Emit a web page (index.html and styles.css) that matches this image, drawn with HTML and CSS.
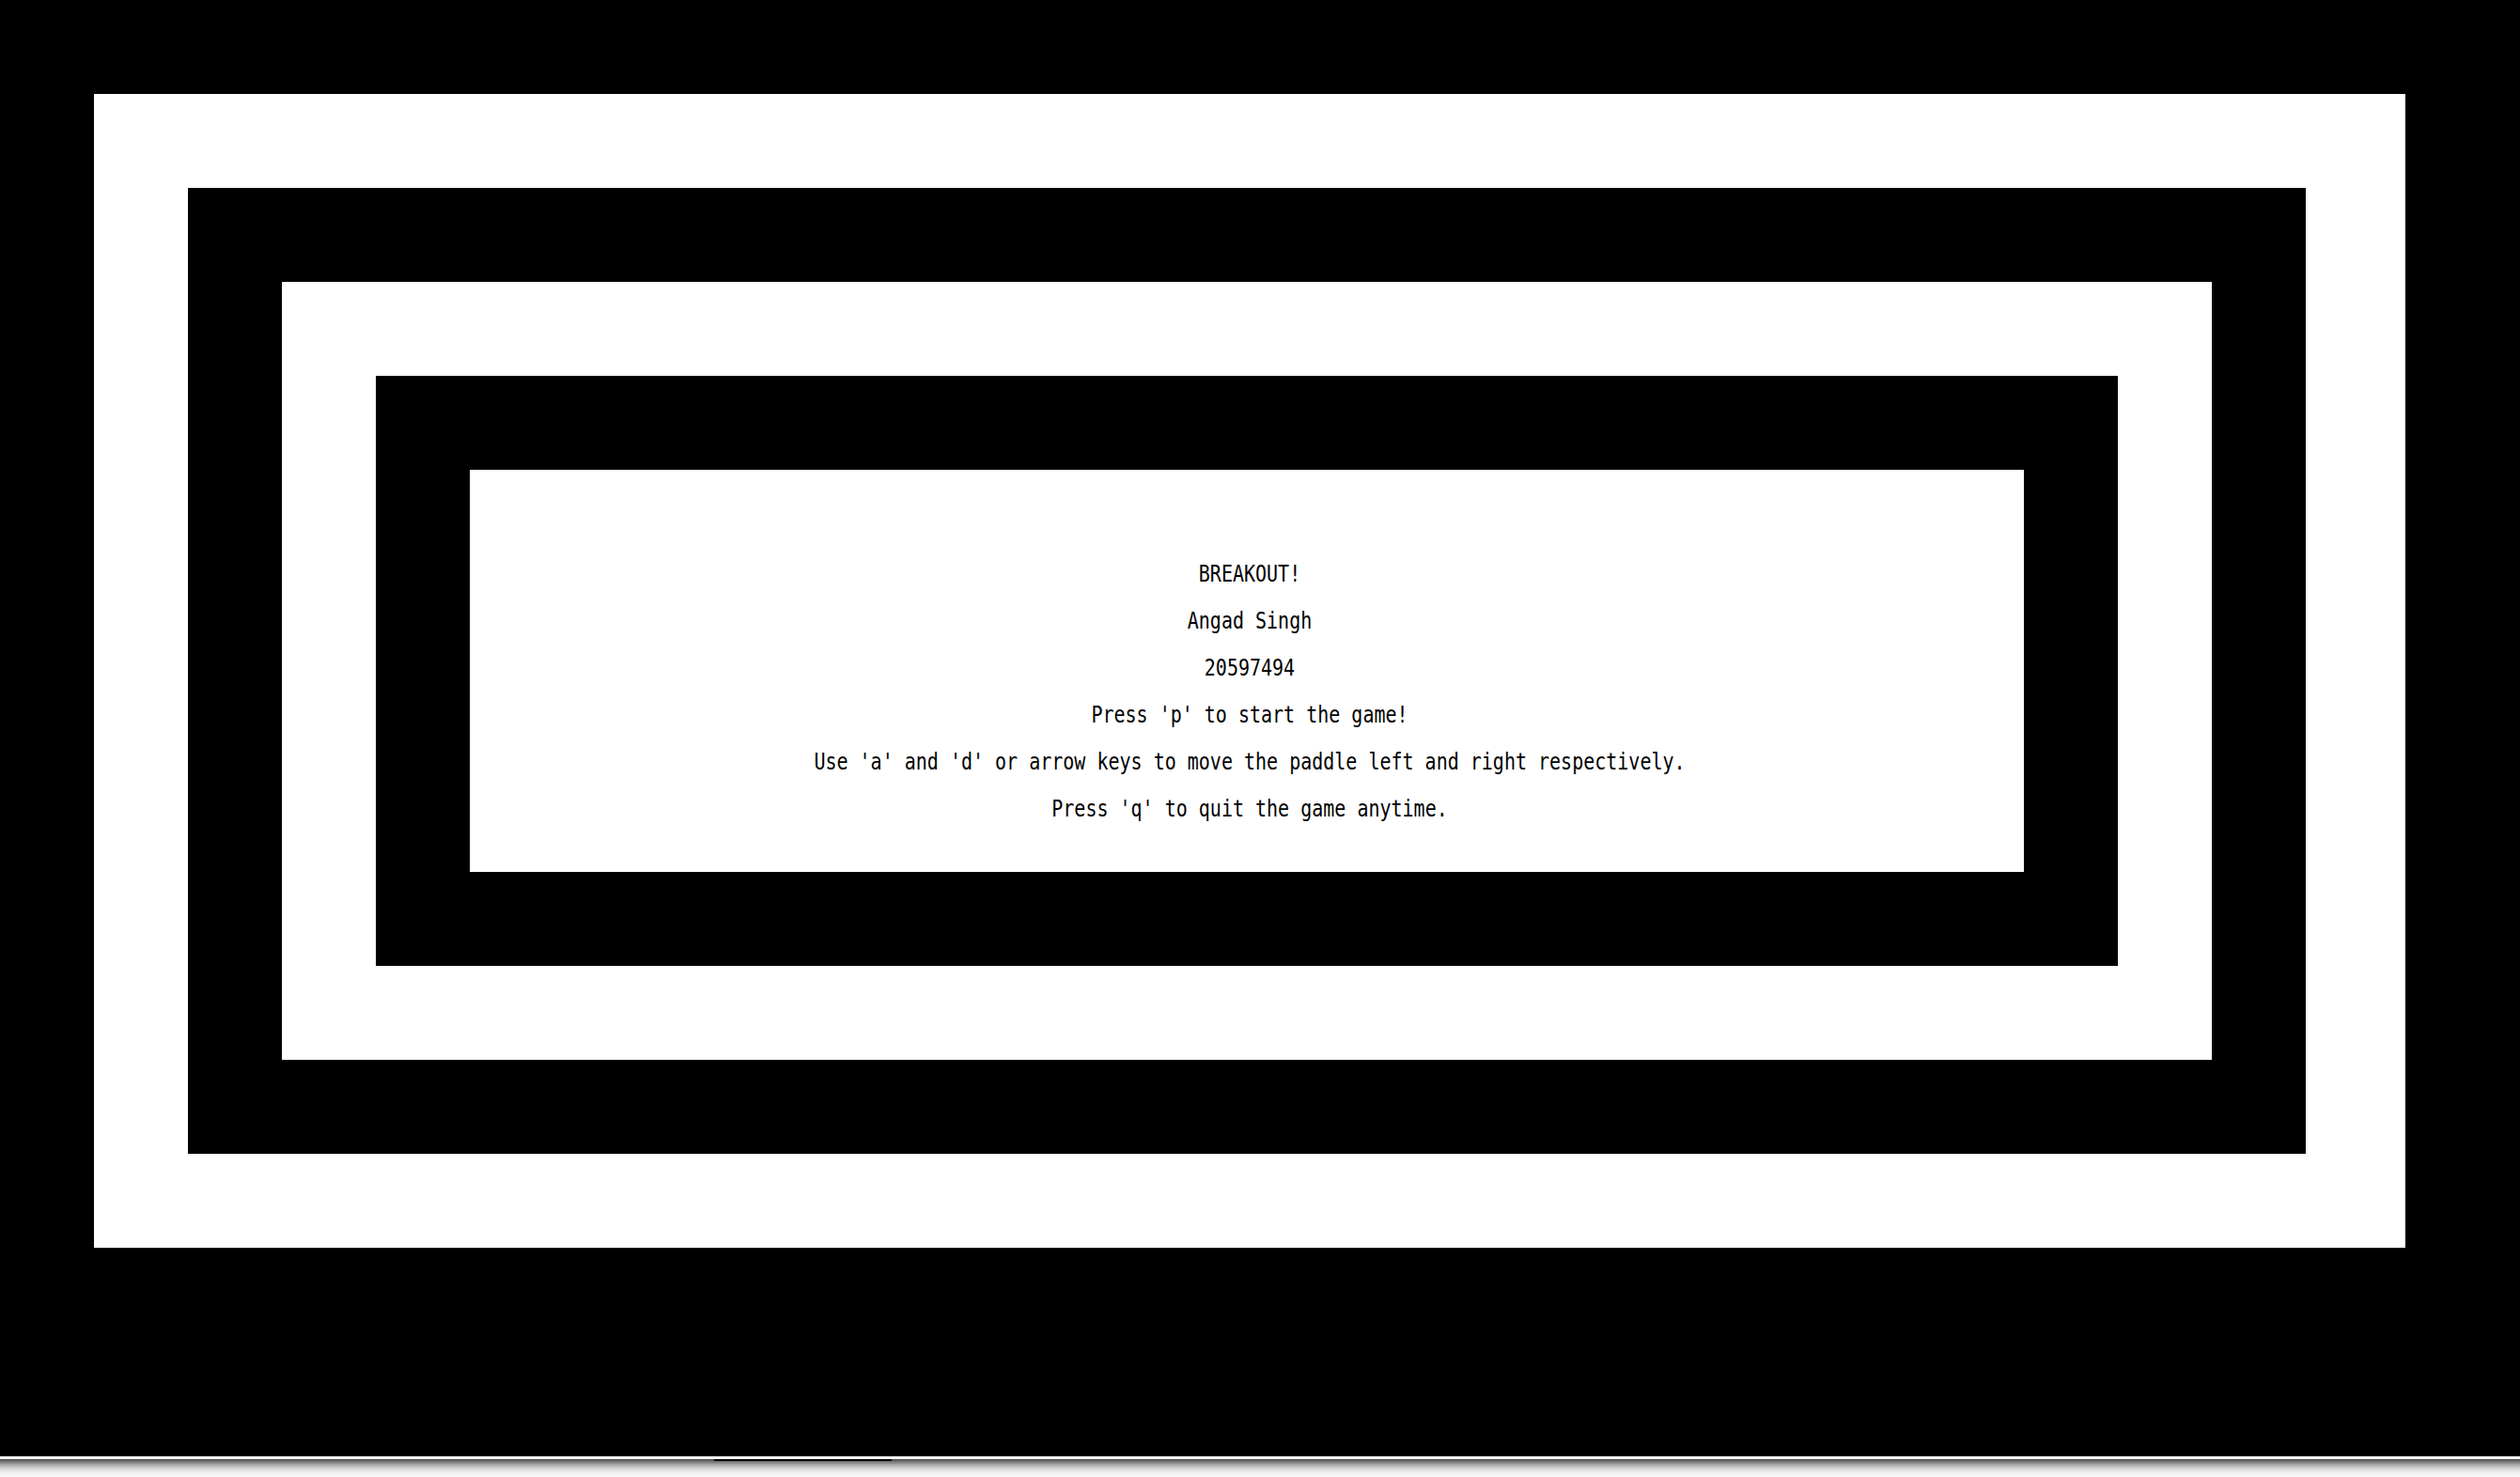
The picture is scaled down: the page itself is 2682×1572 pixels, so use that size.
FILE: index.html
```html
<!DOCTYPE html>
<html lang="en">
<head>
<meta charset="utf-8">
<title>Breakout</title>
<link rel="stylesheet" href="styles.css">
</head>
<body>
<main class="game">
  <div class="ring ring-outer">
    <div class="ring ring-dark">
      <div class="ring ring-light">
        <div class="ring ring-dark">
          <div class="screen">
            <p class="line">BREAKOUT!</p>
            <p class="line">Angad Singh</p>
            <p class="line">20597494</p>
            <p class="line">Press 'p' to start the game!</p>
            <p class="line">Use 'a' and 'd' or arrow keys to move the paddle left and right respectively.</p>
            <p class="line">Press 'q' to quit the game anytime.</p>
          </div>
        </div>
      </div>
    </div>
  </div>
</main>
<footer class="below">
  <span class="link-line"></span>
</footer>
</body>
</html>
```
FILE: styles.css
```css
html, body {
  margin: 0;
  padding: 0;
  background: #fff;
}

.game {
  background: #000;
  height: 1550px;
  box-sizing: border-box;
  padding: 100px 0 0 100px;
}

.ring {
  box-sizing: border-box;
  padding: 100px;
  height: 100%;
}

.ring-outer {
  background: #fff;
  width: 2460px;
  height: 1228px;
  padding: 100px 106px 100px 100px;
}

.ring-dark {
  background: #000;
}

.ring-light {
  background: #fff;
}

.screen {
  background: #fff;
  height: 100%;
  box-sizing: border-box;
  padding: 87px 0 0 6px;
  text-align: center;
}

.line {
  margin: 0;
  height: 50px;
  line-height: 50px;
  font-family: "DejaVu Sans Mono", "Liberation Mono", monospace;
  font-size: 20px;
  color: #000;
  white-space: pre;
  transform: scaleY(1.2);
  transform-origin: 50% 32px;
}

.below {
  height: 22px;
  padding-left: 760px;
  box-sizing: border-box;
  background: linear-gradient(#3c3c3c 0px, #5e5e5e 1px, #7a7a7a 3px, #a8a8a8 6px, #d6d6d6 10px, #f2f2f2 15px, #fdfdfd 22px);
}

.link-line {
  display: block;
  width: 189px;
  height: 2px;
  margin-top: 3px;
  background: #000;
}
```
